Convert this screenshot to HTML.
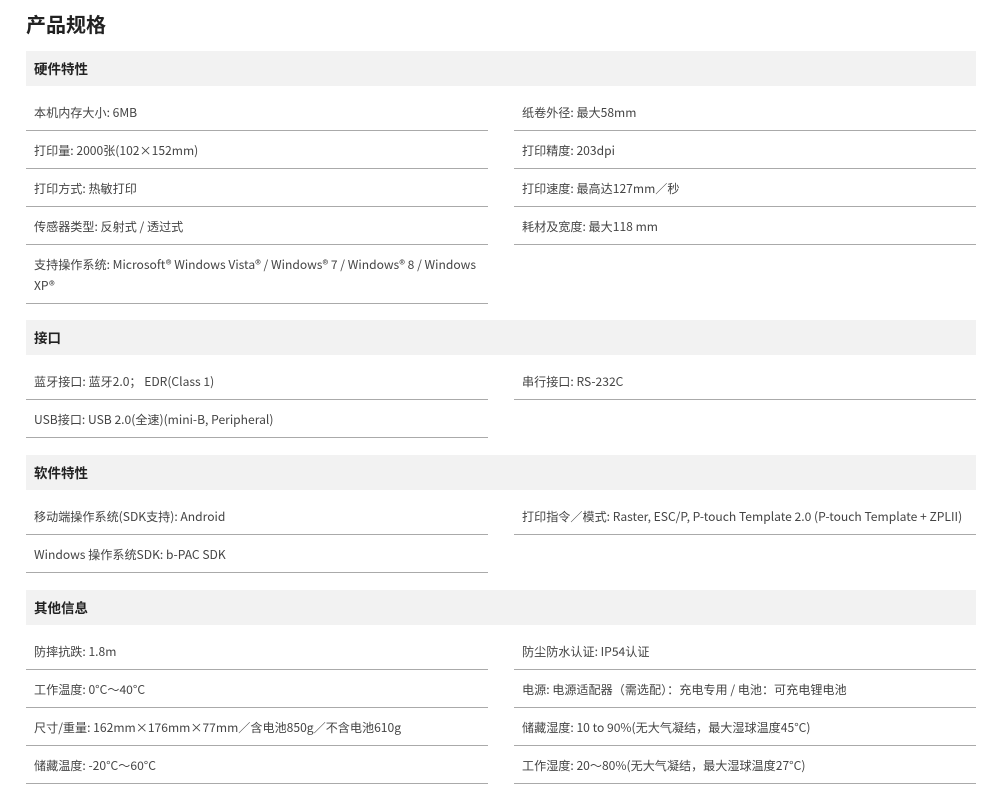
<!DOCTYPE html>
<html><head><meta charset="utf-8"><style>
body{margin:0;background:#fff;font-family:"Noto Sans CJK SC","Liberation Sans",sans-serif;color:#444;}
h1{position:absolute;left:26px;top:9px;margin:0;font-size:20px;font-weight:bold;color:#222;line-height:30px;}
.sec{position:absolute;left:26px;width:950px;}
.hd{height:35px;background:#f2f2f2;font-size:13.5px;font-weight:bold;color:#222;line-height:35px;padding-left:8px;}
.cols{display:flex;justify-content:space-between;margin-top:7px;}
.col{width:462px;}
.row{font-size:12.1px;line-height:21px;height:21px;padding:9px 8px 7px;border-bottom:1px solid #aaa;white-space:nowrap;}
.row.two{height:42px;}
</style></head><body>
<h1>产品规格</h1>
<div class="sec" style="top:51px"><div class="hd">硬件特性</div><div class="cols">
<div class="col"><div class="row">本机内存大小: 6MB</div><div class="row">打印量: 2000张(102×152mm)</div><div class="row">打印方式: 热敏打印</div><div class="row">传感器类型: 反射式 / 透过式</div><div class="row two">支持操作系统: Microsoft® Windows Vista® / Windows® 7 / Windows® 8 / Windows<br>XP®</div></div>
<div class="col"><div class="row">纸卷外径: 最大58mm</div><div class="row">打印精度: 203dpi</div><div class="row">打印速度: 最高达127mm／秒</div><div class="row">耗材及宽度: 最大118 mm</div></div>
</div></div>
<div class="sec" style="top:320px"><div class="hd">接口</div><div class="cols">
<div class="col"><div class="row">蓝牙接口: 蓝牙2.0； EDR(Class 1)</div><div class="row">USB接口: USB 2.0(全速)(mini-B, Peripheral)</div></div>
<div class="col"><div class="row">串行接口: RS-232C</div></div>
</div></div>
<div class="sec" style="top:455px"><div class="hd">软件特性</div><div class="cols">
<div class="col"><div class="row">移动端操作系统(SDK支持): Android</div><div class="row">Windows 操作系统SDK: b-PAC SDK</div></div>
<div class="col"><div class="row">打印指令／模式: Raster, ESC/P, P-touch Template 2.0 (P-touch Template + ZPLII)</div></div>
</div></div>
<div class="sec" style="top:590px"><div class="hd">其他信息</div><div class="cols">
<div class="col"><div class="row">防摔抗跌: 1.8m</div><div class="row">工作温度: 0°C～40°C</div><div class="row">尺寸/重量: 162mm×176mm×77mm／含电池850g／不含电池610g</div><div class="row">储藏温度: -20°C～60°C</div></div>
<div class="col"><div class="row">防尘防水认证: IP54认证</div><div class="row">电源: 电源适配器（需选配）：充电专用 / 电池：可充电锂电池</div><div class="row">储藏湿度: 10 to 90%(无大气凝结，最大湿球温度45°C)</div><div class="row">工作湿度: 20～80%(无大气凝结，最大湿球温度27°C)</div></div>
</div></div>
</body></html>
